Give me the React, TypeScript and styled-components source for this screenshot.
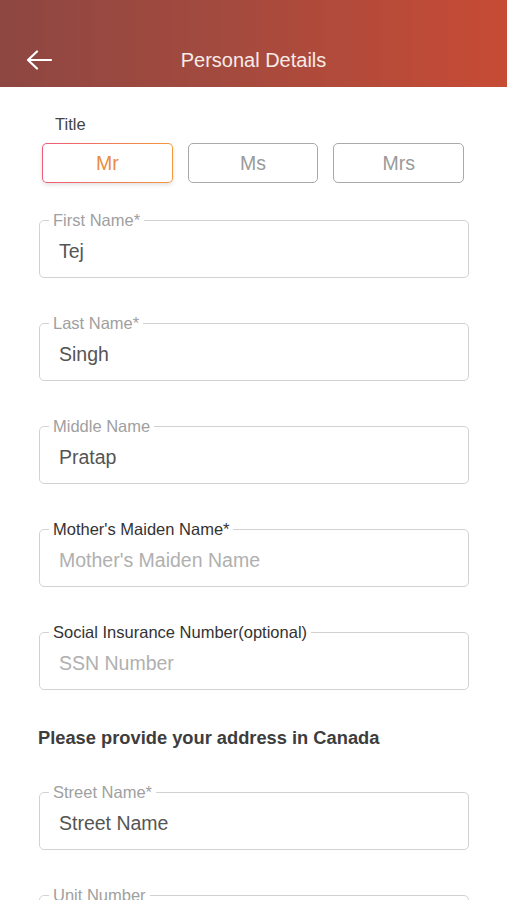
import styled, { createGlobalStyle } from 'styled-components'

const GlobalStyle = createGlobalStyle`
  body {
    margin: 0;
    background: #ffffff;
    font-family: 'Liberation Sans', Arial, sans-serif;
  }
`

const fields = [
  { label: 'First Name*', value: 'Tej', strong: false },
  { label: 'Last Name*', value: 'Singh', strong: false },
  { label: 'Middle Name', value: 'Pratap', strong: false },
  { label: "Mother's Maiden Name*", placeholder: "Mother's Maiden Name", strong: true },
  { label: 'Social Insurance Number(optional)', placeholder: 'SSN Number', strong: true },
]

const BackArrow = () => (
  <svg width="26" height="20" viewBox="0 0 26 20" fill="none">
    <path
      d="M25 10H2M11 1.5L2 10l9 8.5"
      stroke="#ffffff"
      strokeWidth="2.2"
      strokeLinecap="round"
      strokeLinejoin="round"
    />
  </svg>
)

type FieldProps = {
  label: string
  value?: string
  placeholder?: string
  strong?: boolean
}

const Field = ({ label, value, placeholder, strong }: FieldProps) => (
  <FieldBox>
    <FieldLabel $strong={strong}>{label}</FieldLabel>
    <FieldValue $empty={!value}>{value ?? placeholder}</FieldValue>
  </FieldBox>
)

const App = () => {
  return (
    <>
      <GlobalStyle />
      <Header>
        <BackButton type="button" aria-label="Back">
          <BackArrow />
        </BackButton>
        <HeaderTitle>Personal Details</HeaderTitle>
      </Header>
      <Content>
        <TitleLabel>Title</TitleLabel>
        <TitleRow>
          <TitleButton type="button" $active>
            Mr
          </TitleButton>
          <TitleButton type="button">Ms</TitleButton>
          <TitleButton type="button">Mrs</TitleButton>
        </TitleRow>
        <FieldList>
          {fields.map((f) => (
            <Field key={f.label} {...f} />
          ))}
        </FieldList>
        <SectionHeading>Please provide your address in Canada</SectionHeading>
        <FieldList $top={35}>
          <Field label="Street Name*" value="Street Name" />
          <Field label="Unit Number" placeholder="Unit Number" />
        </FieldList>
      </Content>
    </>
  )
}

export default App

const Header = styled.header`
  position: relative;
  display: flex;
  align-items: center;
  justify-content: center;
  height: 87px;
  padding-top: 34px;
  box-sizing: border-box;
  background: linear-gradient(90deg, #8e4742 0%, #a44a3e 45%, #c74b35 100%);
`

const BackButton = styled.button`
  position: absolute;
  left: 26px;
  top: 50px;
  padding: 0;
  border: 0;
  background: none;
  display: flex;
`

const HeaderTitle = styled.h1`
  margin: 0;
  font-size: 20px;
  font-weight: 400;
  color: #f7ebe8;
`

const Content = styled.main`
  display: flex;
  flex-direction: column;
  padding: 28px 38px 0 38px;
`

const TitleLabel = styled.div`
  margin-left: 17px;
  font-size: 16.5px;
  line-height: 18px;
  color: #444444;
`

const TitleRow = styled.div`
  display: flex;
  gap: 15px;
  margin: 10px 5px 0 4px;
`

const TitleButton = styled.button<{ $active?: boolean }>`
  flex: 1;
  height: 40px;
  border-radius: 5px;
  font-family: inherit;
  font-size: 19.5px;
  color: ${({ $active }) => ($active ? '#ea8d42' : '#9a9a9a')};
  border: 1px solid ${({ $active }) => ($active ? 'transparent' : '#a9a9a9')};
  background: ${({ $active }) =>
    $active
      ? 'linear-gradient(#fff, #fff) padding-box, linear-gradient(90deg, #ee5a7a, #f29a3c) border-box'
      : '#ffffff'};
  box-shadow: ${({ $active }) => ($active ? '0 2px 4px rgba(0, 0, 0, 0.12)' : 'none')};
`

const FieldList = styled.div<{ $top?: number }>`
  display: flex;
  flex-direction: column;
  gap: 36px;
  margin-top: ${({ $top }) => $top ?? 28}px;
`

const FieldBox = styled.fieldset`
  margin: 0 0 0 1px;
  width: 430px;
  box-sizing: border-box;
  padding: 0 10px 0 9px;
  border: 1px solid #d2d2d2;
  border-radius: 5px;
`

const FieldLabel = styled.legend<{ $strong?: boolean }>`
  padding: 0 4px;
  font-size: 16.5px;
  line-height: 18px;
  color: ${({ $strong }) => ($strong ? '#333333' : '#a0a0a0')};
`

const FieldValue = styled.div<{ $empty?: boolean }>`
  display: flex;
  align-items: center;
  height: 48px;
  padding: 0 0 3px 10px;
  box-sizing: border-box;
  font-size: 19.5px;
  color: ${({ $empty }) => ($empty ? '#b0b0b0' : '#555555')};
`

const SectionHeading = styled.h2`
  margin: 38px 0 0 0;
  font-size: 18.3px;
  line-height: 20px;
  font-weight: 700;
  color: #3d3d3d;
`
